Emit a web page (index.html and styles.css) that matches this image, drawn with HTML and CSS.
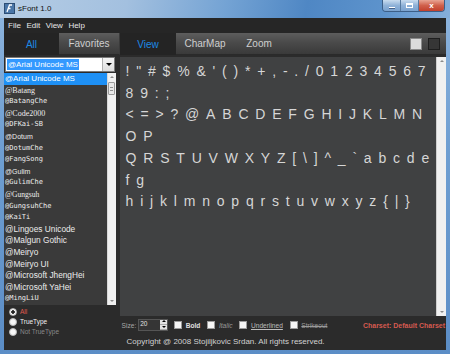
FILE: index.html
```html
<!DOCTYPE html>
<html lang="en">

<head>
    <meta charset="UTF-8">
    <title>sFont 1.0</title>
    <link rel="stylesheet" href="styles.css">
</head>

<body>

    <div class="window">
        <div class="titlebar">
            <span class="app-icon">
                <svg width="11" height="11" viewBox="0 0 11 11">
                    <rect x="0.5" y="0.5" width="10" height="10" fill="#4a76a8" stroke="#2c4d74" />
                    <path d="M3 9 L5.5 2 L8 2 M4 5.5 L6.5 5.5" stroke="#fff" stroke-width="1.3" fill="none" />
                </svg>
            </span>
            <span class="title">sFont 1.0</span>
            <div class="caption-buttons">
                <span class="cap-btn min"><i></i></span>
                <span class="cap-btn max"><i></i></span>
                <span class="cap-btn close">x</span>
            </div>
        </div>

        <div class="client">
            <div class="menubar">
                <span>File</span>
                <span>Edit</span>
                <span>View</span>
                <span>Help</span>
            </div>

            <div class="tabbar">
                <div class="tab current w-all">All</div>
                <div class="tab button w-fav">Favorites</div>
                <div class="tab current w-view">View</div>
                <div class="tab button w-charmap">CharMap</div>
                <div class="tab button w-zoom">Zoom</div>
                <div class="tab button filler">
                    <span class="swatch light"></span>
                    <span class="swatch dark"></span>
                </div>
            </div>

            <div class="main">
                <div class="sidebar">
                    <div class="combo">
                        <div class="combo-text"><span class="sel">@Arial Unicode MS</span></div>
                        <div class="combo-btn"></div>
                    </div>

                    <div class="fontlist">
                        <div class="items">
                            <div class="item selected f-sans">@Arial Unicode MS</div>
                            <div class="item f-serif">@Batang</div>
                            <div class="item f-mono">@BatangChe</div>
                            <div class="item f-serif">@Code2000</div>
                            <div class="item f-mono">@DFKai-SB</div>
                            <div class="item f-small">@Dotum</div>
                            <div class="item f-mono">@DotumChe</div>
                            <div class="item f-mono">@FangSong</div>
                            <div class="item f-small">@Gulim</div>
                            <div class="item f-mono">@GulimChe</div>
                            <div class="item f-serif-sm">@Gungsuh</div>
                            <div class="item f-mono">@GungsuhChe</div>
                            <div class="item f-mono">@KaiTi</div>
                            <div class="item f-ui">@Lingoes Unicode</div>
                            <div class="item f-ui">@Malgun Gothic</div>
                            <div class="item f-ui">@Meiryo</div>
                            <div class="item f-ui">@Meiryo UI</div>
                            <div class="item f-ui">@Microsoft JhengHei</div>
                            <div class="item f-ui">@Microsoft YaHei</div>
                            <div class="item f-mono">@MingLiU</div>
                        </div>
                        <div class="list-scroll">
                            <span class="arrow up"></span>
                            <span class="thumb"></span>
                            <span class="track"></span>
                            <span class="arrow down"></span>
                        </div>
                    </div>

                    <div class="filter">
                        <div class="radio-row all"><span class="radio checked"></span><span>All</span></div>
                        <div class="radio-row tt"><span class="radio"></span><span>TrueType</span></div>
                        <div class="radio-row ntt"><span class="radio"></span><span>Not TrueType</span></div>
                    </div>
                </div>

                <div class="viewer">
                    <div class="preview">
                        <div class="glyphs">
                            <div>!&quot;#$%&amp;'()*+,-./01234567</div>
                            <div>89:;</div>
                            <div>&lt;=&gt;?@ABCDEFGHIJKLMN</div>
                            <div>OP</div>
                            <div>QRSTUVWXYZ[\]^_`abcde</div>
                            <div>fg</div>
                            <div>hijklmnopqrstuvwxyz{|}</div>
                        </div>
                        <div class="preview-scroll">
                            <span class="arrow up"></span>
                            <span class="track"></span>
                            <span class="arrow down"></span>
                        </div>
                    </div>

                    <div class="options">
                        <span class="size-label">Size:</span>
                        <div class="spin">
                            <span class="spin-value">20</span>
                            <span class="spin-btns"><i class="up"></i><i class="down"></i></span>
                        </div>
                        <label class="opt"><span class="check"></span><span class="bold">Bold</span></label>
                        <label class="opt"><span class="check"></span><span class="italic">Italic</span></label>
                        <label class="opt"><span class="check"></span><span class="underline">Underlined</span></label>
                        <label class="opt"><span class="check"></span><span class="strike">Strikeout</span></label>
                        <span class="charset">Charset: Default Charset</span>
                    </div>

                    <div class="copyright">Copyright @ 2008 Stojiljkovic Srdan. All rights reserved.</div>
                </div>
            </div>
        </div>
    </div>

</body>

</html>
```

FILE: styles.css
```css
* {
    box-sizing: border-box;
}

body {
    margin: 0;
    padding: 0;
    font-family: "Liberation Sans", Arial, sans-serif;
    background-color: #6b9bcf;
}

.window {
    width: 450px;
    height: 354px;
    display: flex;
    flex-direction: column;
    padding: 0 4px 4px;
    background: linear-gradient(180deg, #8fb5de 0%, #6f9fd2 40%, #5b8dc6 100%);
}

/* title bar */

.titlebar {
    height: 18px;
    margin: 0 -4px;
    padding: 0 5px 0 4px;
    display: flex;
    align-items: flex-start;
    background: linear-gradient(100deg, #b6cde5 0%, #a3c0df 28%, #74a3d4 50%, #4f87c4 68%, #5d93cc 85%, #86afdb 100%);
}

.app-icon {
    width: 11px;
    height: 11px;
    margin-top: 3px;
    display: flex;
}

.title {
    margin: 3px 0 0 3px;
    font-size: 8px;
    line-height: 11px;
    color: #111;
}

.caption-buttons {
    margin-left: auto;
    display: flex;
    height: 12px;
    border: 1px solid #3c5f88;
    border-top: none;
    border-radius: 0 0 4px 4px;
    overflow: hidden;
}

.cap-btn {
    height: 11px;
    display: flex;
    align-items: center;
    justify-content: center;
    background: linear-gradient(180deg, #c9dcef 0%, #8fb2d8 50%, #7aa2cf 100%);
    border-right: 1px solid #56799f;
}

.cap-btn.min {
    width: 18px;
}

.cap-btn.min i {
    width: 6px;
    height: 2px;
    margin-top: 5px;
    background: #fff;
    border: 1px solid #44618a;
    border-width: 0 0 1px;
}

.cap-btn.max {
    width: 18px;
}

.cap-btn.max i {
    width: 7px;
    height: 5px;
    border: 1px solid #fff;
    border-top-width: 2px;
}

.cap-btn.close {
    width: 25px;
    border-right: none;
    background: linear-gradient(180deg, #e8a493 0%, #d0604b 50%, #c2402d 100%);
    color: #fff;
    font-size: 8px;
    font-weight: bold;
    line-height: 11px;
}

/* client */

.client {
    flex: 1;
    display: flex;
    flex-direction: column;
    background-color: #2b2b2b;
}

.menubar {
    height: 15px;
    display: flex;
    align-items: center;
    gap: 5.5px;
    padding-left: 4px;
    background-color: #262626;
    color: #e6e6e6;
    font-size: 8px;
}

.tabbar {
    height: 22px;
    display: flex;
    background-color: #222;
}

.tab {
    display: flex;
    align-items: center;
    justify-content: center;
    font-size: 10px;
    color: #cfcfcf;
}

.tab.current {
    color: #1c8ae6;
    background-color: #242424;
}

.tab.button {
    background: linear-gradient(180deg, #5d5d5d 0%, #4a4a4a 45%, #3a3a3a 100%);
    border-bottom: 1px solid #2a2a2a;
}

.w-all {
    width: 55px;
}

.w-fav {
    width: 61px;
    border-right: 1px solid #3a3a3a;
}

.w-view {
    width: 56px;
}

.w-charmap {
    width: 58px;
}

.w-zoom {
    width: 50px;
}

.filler {
    flex: 1;
    justify-content: flex-end;
    gap: 6px;
    padding-right: 6px;
}

.swatch {
    width: 12px;
    height: 12px;
    border: 1px solid #1e1e1e;
}

.swatch.light {
    background-color: #dcdcdc;
    border-color: #8a8a8a;
}

.swatch.dark {
    background-color: #363636;
}

/* main area */

.main {
    flex: 1;
    display: flex;
    gap: 4px;
    padding-top: 2px;
}

.sidebar {
    width: 112px;
    display: flex;
    flex-direction: column;
}

.combo {
    height: 15px;
    margin: 0 1px 1px 1px;
    display: flex;
    background-color: #fff;
    border: 1px solid #7a7a7a;
}

.combo-text {
    flex: 1;
    display: flex;
    align-items: center;
    padding-left: 1px;
    font-size: 8px;
    line-height: 11px;
}

.combo-text .sel {
    height: 11px;
    padding: 0 1px;
    background-color: #3399ff;
    color: #fff;
    white-space: nowrap;
}

.combo-btn {
    width: 12px;
    position: relative;
    background: linear-gradient(180deg, #f4f4f4 0%, #dedede 100%);
    border-left: 1px solid #b0b0b0;
}

.combo-btn::after {
    content: "";
    position: absolute;
    left: 3px;
    top: 5px;
    border: 3px solid transparent;
    border-top: 3px solid #000;
}

.fontlist {
    height: 232px;
    display: flex;
    background-color: #3a3a3a;
}

.items {
    flex: 1;
    overflow: hidden;
}

.item {
    height: 11.6px;
    line-height: 11.6px;
    padding-left: 1px;
    color: #ececec;
    white-space: nowrap;
}

.item.selected {
    background-color: #1e90f5;
    color: #fff;
}

.f-sans {
    font-size: 8px;
}

.f-serif {
    font-family: "Liberation Serif", serif;
    font-size: 8px;
}

.f-serif-sm {
    font-family: "Liberation Serif", serif;
    font-size: 7.6px;
}

.f-mono {
    font-family: "DejaVu Sans Mono", monospace;
    font-size: 7px;
}

.f-small {
    font-size: 7px;
}

.f-ui {
    font-size: 8.3px;
}

.list-scroll,
.preview-scroll {
    display: flex;
    flex-direction: column;
    align-items: center;
    background-color: #f0f0f0;
}

.list-scroll {
    width: 9px;
    border-left: 1px solid #d8d8d8;
}

.preview-scroll {
    width: 10px;
    border-left: 1px solid #cfcfcf;
}

.arrow {
    width: 0;
    height: 0;
    margin: 3px 0;
    border: 2px solid transparent;
}

.arrow.up {
    border-bottom: 2px solid #8a8a8a;
    border-top: none;
}

.arrow.down {
    border-top: 2px solid #8a8a8a;
    border-bottom: none;
}

.thumb {
    width: 7px;
    height: 13px;
    margin-top: 1px;
    border: 1px solid #9a9a9a;
    border-radius: 1px;
    background: repeating-linear-gradient(180deg, #e8e8e8 0, #e8e8e8 2px, #8e8e8e 2px, #8e8e8e 3px) center / 3px 7px no-repeat, #e8e8e8;
}

.track {
    flex: 1;
}

.filter {
    padding: 2px 0 0 5px;
    font-size: 6.5px;
    line-height: 10px;
}

.radio-row {
    height: 10px;
    display: flex;
    align-items: center;
    gap: 3px;
}

.radio {
    width: 8px;
    height: 8px;
    flex: none;
    border-radius: 50%;
    background-color: #f6f6f6;
    border: 1px solid #b8b8b8;
}

.radio.checked {
    background: radial-gradient(circle, #222 0, #222 1.5px, #f6f6f6 2px);
}

.radio-row.all {
    color: #e05a4e;
}

.radio-row.tt {
    color: #f0f0f0;
}

.radio-row.ntt {
    color: #8a8a8a;
}

/* viewer */

.viewer {
    flex: 1;
    display: flex;
    flex-direction: column;
}

.preview {
    height: 259px;
    display: flex;
    background-color: #404142;
}

.glyphs {
    flex: 1;
    padding: 4px 0 0 6px;
    font-size: 14px;
    line-height: 21.7px;
    letter-spacing: 6.8px;
    color: #d6d6d6;
    white-space: nowrap;
    overflow: hidden;
}

.options {
    height: 18px;
    display: flex;
    align-items: center;
    padding-left: 2px;
    font-size: 6.6px;
    color: #bdbdbd;
}

.size-label {
    color: #a8a8a8;
}

.spin {
    width: 30px;
    height: 12px;
    margin: 0 6px 0 2px;
    display: flex;
    background-color: #353535;
    border: 1px solid #555;
}

.spin-value {
    flex: 1;
    padding-left: 1px;
    font-size: 6.5px;
    line-height: 7px;
    color: #e0e0e0;
}

.spin-btns {
    width: 7px;
    display: flex;
    flex-direction: column;
    background-color: #e2e2e2;
}

.spin-btns i {
    flex: 1;
    position: relative;
    border-bottom: 1px solid #aaa;
}

.spin-btns i::after {
    content: "";
    position: absolute;
    left: 1.5px;
    border: 2px solid transparent;
}

.spin-btns i.up::after {
    top: 0;
    border-bottom-color: #000;
    border-top: none;
}

.spin-btns i.down::after {
    top: 1px;
    border-top-color: #000;
    border-bottom: none;
}

.opt {
    display: flex;
    align-items: center;
    gap: 3.5px;
    margin-right: 7px;
}

.check {
    width: 8px;
    height: 8px;
    background-color: #f6f6f6;
    border: 1px solid #9c9c9c;
}

.bold {
    font-weight: bold;
    color: #e0e0e0;
}

.italic {
    font-style: italic;
    color: #9a9a9a;
}

.underline {
    text-decoration: underline;
}

.strike {
    text-decoration: line-through;
    color: #9a9a9a;
}

.charset {
    margin-left: auto;
    padding-right: 1px;
    font-weight: bold;
    font-size: 7px;
    color: #d65a50;
}

.copyright {
    height: 16px;
    padding-left: 7px;
    font-size: 8px;
    line-height: 16px;
    color: #d2d2d2;
}
```
